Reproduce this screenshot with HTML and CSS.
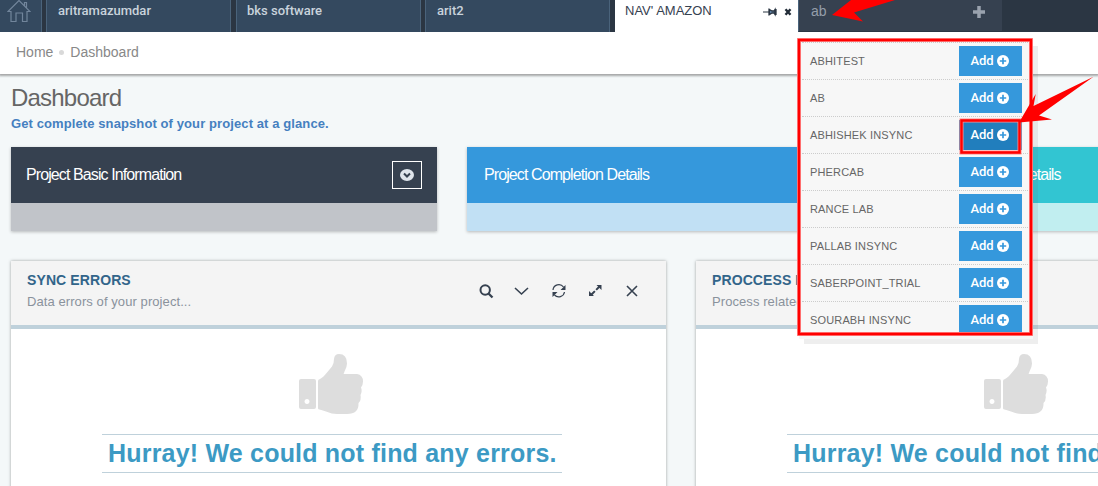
FILE: index.html
```
<!DOCTYPE html>
<html lang="en">
<head>
<meta charset="utf-8">
<title>Dashboard</title>
<link rel="stylesheet" href="styles.css">
</head>
<body>
<svg class="defs" aria-hidden="true">
  <symbol id="plus-circle" viewBox="0 0 12 12"><circle cx="6" cy="6" r="6" fill="currentColor"/><path class="cut" d="M6 2.8v6.4M2.8 6h6.4"/></symbol>
  <symbol id="thumb" viewBox="0 0 65 61"><path fill-rule="evenodd" d="M2 25H15Q17 25 17 27V53Q17 55 15 55H2Q0 55 0 53V27Q0 25 2 25ZM8 45a2.5 2.5 0 1 0 .01 0Z"/><path d="M19 27Q19 25.500 21 25Q24 23.500 28 18.500L33 12.500Q35 9.500 35 5Q35.500 0 40 0Q48 0 48 9.500Q48 13 45.500 17.500Q45 19 44.500 20H58Q64 21 64 27.500Q64 31 62 33.500Q63.500 37 61.500 41Q62.500 46 59.500 49Q60 60 48 60H38Q33 60 27 57.500Q23 56 19.500 55.200Q19 55 19 54Z"/></symbol>
</svg>
<nav class="tabs">
  <a class="tab home"><svg width="24" height="24" viewBox="0 0 24 24"><path d="M1 12.500 12 1.500 23 12.500H20V22.500H15.500V14H9v8.500H4V12.500ZM17.500 7V3.500h2v5.500"/></svg></a>
  <a class="tab"><span>aritramazumdar</span></a>
  <a class="tab shifted"><span>bks software</span></a>
  <a class="tab"><span>arit2</span></a>
  <a class="tab active shifted"><span>NAV' AMAZON</span>
    <svg width="30" height="10" viewBox="0 0 30 10"><path d="M0 5h6" stroke="#2b3643"/><path d="M6 1.500v7M6.500 2.500 9 4h2l1-1.500v5L11 6H9L6.500 7.500ZM13 2v6" fill="#6a90b5" stroke="#2b3643" stroke-width="1.300"/><path d="m22.500 2.200 5 5.600m0-5.600-5 5.600" stroke="#222c38" stroke-width="2.400"/></svg>
  </a>
  <div class="tab search"><span>ab</span><svg width="12" height="12" viewBox="0 0 12 12"><path d="M6 0v12M0 6h12" stroke="#9aa2ae" stroke-width="3.500"/></svg></div>
</nav>
<div class="crumbs"><span>Home</span><i></i><span>Dashboard</span></div>
<main>
  <h1><span>Dashboard</span></h1>
  <p class="lead"><span>Get complete snapshot of your project at a glance.</span></p>
  <section class="cards">
    <article class="card dark"><header><span>Project Basic Information</span><b><svg width="14" height="12" viewBox="0 0 14 12"><ellipse cx="7" cy="6" rx="7" ry="6" fill="#dfe5ec"/><path d="m4 4.500 3 3 3-3" fill="none" stroke="#364150" stroke-width="2"/></svg></b></header></article>
    <article class="card blue"><header><span>Project Completion Details</span></header></article>
    <article class="card teal"><header><span>Details</span></header></article>
  </section>
  <section class="panels">
    <article class="panel">
      <header>
        <div><h2><span>SYNC ERRORS</span></h2><p><span>Data errors of your project...</span></p></div>
        <svg class="tools" width="162" height="16" viewBox="0 0 162 16">
          <g transform="translate(0 1)"><circle cx="6.200" cy="6" r="4.700" stroke-width="2"/><path d="m9.500 9.500 4 4" stroke-width="2.300"/></g>
          <path d="m36 5 6.500 6L49 5" stroke-width="1.600"/>
          <path d="M74 7a5.800 5.800 0 0 1 10.500-3M85.500 9A5.800 5.800 0 0 1 75.500 12" stroke-width="1.200"/><path d="M86.500 2v5h-5zM73.500 14V9h5z" fill="#364150" stroke="none"/>
          <path d="m112 12 9-9" stroke-width="2" stroke-dasharray="5.500 1.800"/><path d="M117.500 2h5v5zM110 8v5h5z" fill="#364150" stroke="none"/>
          <path d="m148 3 10 10m0-10-10 10" stroke-width="1.600"/>
        </svg>
      </header>
      <div class="body"><svg class="thumb" width="65" height="61"><use href="#thumb"/></svg><div class="msg"><span>Hurray! We could not find any errors.</span></div></div>
    </article>
    <article class="panel">
      <header><div><h2><span>PROCCESS I</span></h2><p><span>Process related</span></p></div></header>
      <div class="body"><svg class="thumb" width="65" height="61"><use href="#thumb"/></svg><div class="msg"><span>Hurray! We could not find any errors.</span></div></div>
    </article>
  </section>
</main>
<div class="dropdown">
  <ul>
    <li><span>ABHITEST</span><button>Add <svg width="12" height="12"><use href="#plus-circle"/></svg></button></li>
    <li><span>AB</span><button>Add <svg width="12" height="12"><use href="#plus-circle"/></svg></button></li>
    <li><span>ABHISHEK INSYNC</span><button class="hover">Add <svg width="12" height="12"><use href="#plus-circle"/></svg></button></li>
    <li><span>PHERCAB</span><button>Add <svg width="12" height="12"><use href="#plus-circle"/></svg></button></li>
    <li><span>RANCE LAB</span><button>Add <svg width="12" height="12"><use href="#plus-circle"/></svg></button></li>
    <li><span>PALLAB INSYNC</span><button>Add <svg width="12" height="12"><use href="#plus-circle"/></svg></button></li>
    <li><span>SABERPOINT_TRIAL</span><button>Add <svg width="12" height="12"><use href="#plus-circle"/></svg></button></li>
    <li><span>SOURABH INSYNC</span><button>Add <svg width="12" height="12"><use href="#plus-circle"/></svg></button></li>
  </ul>
</div>
<svg class="marks" width="1098" height="486" viewBox="0 0 1098 486">
  <g fill="none"><path d="M799 40h232v294h-232z" stroke="#ff8a8a" stroke-width="4"/><path d="M799 40h232v294h-232z" stroke="#f00" stroke-width="2.400"/>
  <path d="M961.500 120.500h58v32h-58z" stroke="#ff8a8a" stroke-width="4"/><path d="M961.500 120.500h58v32h-58z" stroke="#f00" stroke-width="2.400"/></g>
  <path d="M832 15 851 0H895L854 12.500 863 21.500ZM1019 122.500 1035.700 94 1033.500 106 1093.500 76.700 1039 115.500 1052 119.500Z" fill="#f00"/>
</svg>
</body>
</html>
```
FILE: styles.css
```
* { box-sizing: border-box; }
html { overflow: hidden; }
body { margin: 0; width: 1098px; height: 486px; overflow: hidden; position: relative; background: #f4f8f9; font-family: "Liberation Sans", Arial, sans-serif; }
h1, h2, p, ul { margin: 0; padding: 0; font-weight: normal; }
span { white-space: nowrap; }
.defs { position: absolute; width: 0; height: 0; }
.cut { fill: none; stroke: #3598dc; stroke-width: 1.7; }

.tabs { display: flex; gap: 4px; height: 32px; background: #2b3643; position: relative; z-index: 1; }
.tab { flex: none; width: 185px; height: 32px; padding: 2px 0 0 11px; background: #34495f; border: solid #4a637b; border-width: 0 1px; color: #c9d3dc; font: 500 13px/17px Roboto, sans-serif; }
.tab.shifted { margin-left: 1px; }
.tab.shifted:not(.active) { padding-left: 10px; }
.tab.home { width: 42px; padding: 0 0 0 7px; border-left: 0; }
.home svg { display: block; fill: none; stroke: #71859b; stroke-width: 1.2; margin-top: -1px; }
.tab.active { display: flex; justify-content: space-between; width: 183px; padding: 2px 5px 0 10px; background: #fff; border: 0; color: #364150; font: 13px/17px "Liberation Sans", Arial, sans-serif; }
.active svg { margin-top: 5px; }
.tab.search { display: flex; justify-content: space-between; width: 204px; margin-left: -4px; padding: 3px 17px 0 12px; border-width: 0 0 1px 1px; border-bottom-color: #2b3643; background: #364150; color: #959eaa; font: 14px/17px "Liberation Sans", Arial, sans-serif; }
.search svg { margin-top: 3px; }

.crumbs { display: flex; align-items: center; height: 42px; padding: 0 0 2px 16px; background: #fff; box-shadow: 0 1px 2px 1px #a5a7a8; position: relative; color: #888; font-size: 14px; }
.crumbs i { width: 5px; height: 5px; margin: 0 6px; border-radius: 50%; background: #d9d9d9; }

main { width: 1098px; height: 412px; overflow: hidden; padding: 10px 0 0 11px; }
h1 { height: 29px; color: #666; font-size: 24px; line-height: 28px; letter-spacing: -.8px; }
.lead { height: 34px; color: #4580c0; font-size: 13px; font-weight: bold; line-height: 21px; letter-spacing: .1px; }
.cards { display: grid; grid-template-columns: repeat(3, 426px); gap: 30px; height: 84px; }
.card { box-shadow: 0 1px 3px rgba(0,0,0,.25); }
.card header { display: flex; justify-content: space-between; height: 56px; padding: 14px 15px 0; color: #fff; font-size: 16px; line-height: 27px; letter-spacing: -.9px; }
.card b { display: flex; align-items: center; justify-content: center; width: 30px; height: 28px; border: 1px solid #fff; }
.dark { background: #c1c4c9; } .dark header { background: #364150; }
.blue { background: #c1e0f4; } .blue header { background: #3598dc; padding-left: 17px; }
.teal { background: #c1eef0; } .teal header { background: #32c5d2; padding-left: 95px; }

.panels { display: grid; grid-template-columns: 655px 655px; gap: 30px; margin-top: 30px; }
.panel { height: 235px; background: #fff; box-shadow: 0 0 3px rgba(0,0,0,.35); }
.panel header { display: flex; justify-content: space-between; height: 68px; padding: 11px 25px 0 16px; background: #f4f4f4; border-bottom: 4px solid #bfd1db; }
.panel h2 { color: #32658a; font-size: 14px; font-weight: bold; line-height: 16px; height: 21px; letter-spacing: .1px; }
.panel p { color: #8a929c; font-size: 13px; line-height: 18px; letter-spacing: .08px; }
.tools { margin-top: 11px; fill: none; stroke: #364150; }
.body { display: flex; flex-direction: column; align-items: flex-start; padding: 25px 0 0 91px; }
.thumb { margin-left: 197px; fill: #ddd; }
.msg { width: 460px; height: 39px; margin-top: 19px; padding-left: 6px; border: solid #bfd1db; border-width: 1px 0; color: #3c9ac4; font-size: 25px; font-weight: bold; line-height: 37px; letter-spacing: .2px; }

.dropdown { position: absolute; left: 799px; top: 41px; width: 234px; height: 298px; padding: 1px 3px 0; background: #f7f7f7; box-shadow: 5px 5px rgba(102,102,102,.11); }
.dropdown ul { height: 293px; overflow: hidden; list-style: none; }
.dropdown li { display: flex; justify-content: space-between; align-items: flex-start; height: 37px; padding: 3px 8px 0; border-top: 1px dotted #ccc; color: #666; font-size: 11px; line-height: 31px; letter-spacing: .15px; }
.dropdown button { display: flex; gap: 4px; align-items: center; width: 63px; height: 30px; padding: 0 0 0 11.5px; border: 0; background: #3598dc; color: #fff; font: 500 13px/30px Roboto, sans-serif; letter-spacing: -.15px; }
.dropdown button.hover { background: #217ebd; }
.hover .cut { stroke: #217ebd; }
.marks { position: absolute; left: 0; top: 0; z-index: 2; pointer-events: none; }
```
